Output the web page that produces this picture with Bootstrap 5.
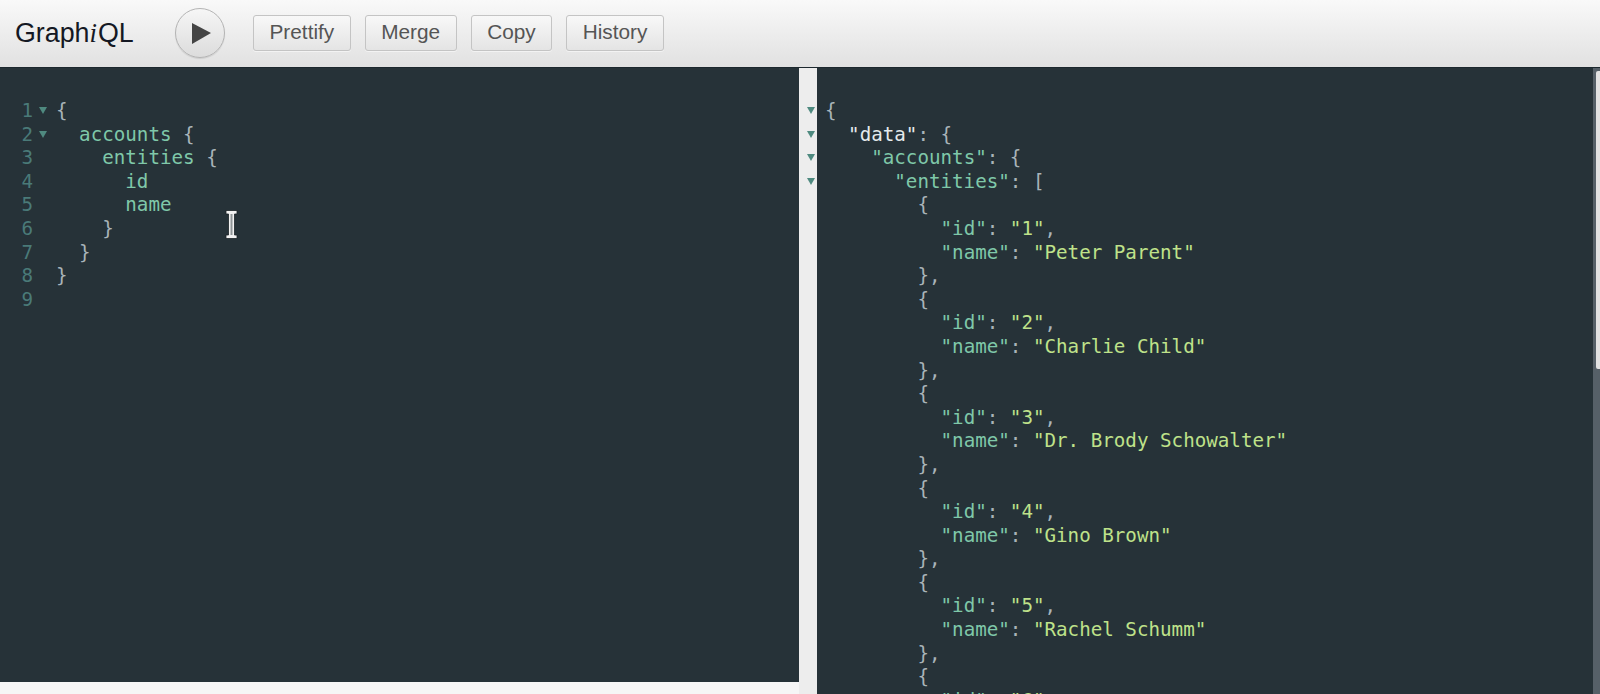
<!DOCTYPE html>
<html lang="en">
<head>
<meta charset="utf-8">
<title>GraphiQL</title>
<link href="https://cdn.jsdelivr.net/npm/bootstrap@5.3.0/dist/css/bootstrap.min.css" rel="stylesheet">
<style>
html,body{height:100%;overflow:hidden;background:#eee;}
.gq-top{height:68px;padding:8px 0 0 15px;background:linear-gradient(#f9f9f9,#e1e1e1);border-bottom:1px solid #1c282e;}
.gq-title{font-family:"Liberation Sans",sans-serif;font-size:26.8px;color:#141823;width:159.5px;line-height:50px;}
.gq-title em{font-family:"Liberation Serif",serif;padding-right:1px;}
.gq-play{width:50px;height:50px;border-radius:50%;border:1px solid #b4b4b4;padding:0;background:linear-gradient(#f6f6f6,#dcdcdc);box-shadow:0 1px 1px rgba(0,0,0,.1);margin-right:28.5px;}
.gq-tool{font-family:"Liberation Sans",sans-serif;font-size:20.8px;line-height:22px;color:#555;height:36px;padding:0 15.5px 2px;border:1px solid #c4c4c4;border-radius:3px;background:linear-gradient(#f8f8f8,#e4e4e4);margin-right:14px;margin-top:7px;box-shadow:0 1px 0 rgba(255,255,255,.5);}
.gq-main{height:626px;}
.gq-left{width:799px;height:626px;}
.gq-pane{background:#263238;font-family:"DejaVu Sans Mono",monospace;font-size:19.2px;line-height:23.6px;color:#a9b4b9;}
.gq-left .gq-pane{height:614px;padding-top:31px;}
.gq-strip{height:12px;background:#f6f6f6;}
.gq-split{width:18px;background:#ededed;padding-top:31px;}
.gq-right{padding:31px 0 0 8px;height:626px;overflow:hidden;}
.gq-row{height:23.6px;white-space:pre;}
.gq-num{width:33px;text-align:right;color:#4a7a78;}
.gq-fold{width:23px;height:23.6px;padding-left:6px;display:flex;align-items:center;}
.gq-tri{width:0;height:0;border-left:4px solid transparent;border-right:4px solid transparent;border-top:7px solid #4f8a80;display:block;}
.gq-split .gq-fold{width:18px;padding-left:8px;}
.gq-k{color:#7fc8a9;}
.gq-w{color:#e4eaec;}
.gq-s{color:#bfe28a;}
.gq-track{width:7px;background:#566068;}
.gq-thumb{width:4px;height:298px;margin:3px 0 0 3px;background:#e2e2e2;border-radius:2px 0 0 2px;display:block;}
.gq-caret{position:absolute;left:224px;top:141px;width:15px;height:31px;}
</style>
</head>
<body class="m-0">
<div class="gq-top d-flex align-items-start">
  <div class="gq-title">Graph<em>i</em>QL</div>
  <button class="gq-play d-flex align-items-center justify-content-center" type="button" aria-label="Run">
    <svg width="24" height="24" viewBox="0 0 24 24"><path d="M4 2 L23 12 L4 23 Z" fill="#444"/></svg>
  </button>
  <button class="btn gq-tool" type="button">Prettify</button>
  <button class="btn gq-tool" type="button">Merge</button>
  <button class="btn gq-tool" type="button">Copy</button>
  <button class="btn gq-tool" type="button">History</button>
</div>
<div class="gq-main d-flex position-relative">
  <div class="gq-left flex-shrink-0">
    <div class="gq-pane">
      <div class="gq-row d-flex"><span class="gq-num">1</span><span class="gq-fold"><i class="gq-tri"></i></span><span>{</span></div>
      <div class="gq-row d-flex"><span class="gq-num">2</span><span class="gq-fold"><i class="gq-tri"></i></span><span>  <span class="gq-k">accounts</span> {</span></div>
      <div class="gq-row d-flex"><span class="gq-num">3</span><span class="gq-fold"></span><span>    <span class="gq-k">entities</span> {</span></div>
      <div class="gq-row d-flex"><span class="gq-num">4</span><span class="gq-fold"></span><span>      <span class="gq-k">id</span></span></div>
      <div class="gq-row d-flex"><span class="gq-num">5</span><span class="gq-fold"></span><span>      <span class="gq-k">name</span></span></div>
      <div class="gq-row d-flex"><span class="gq-num">6</span><span class="gq-fold"></span><span>    }</span></div>
      <div class="gq-row d-flex"><span class="gq-num">7</span><span class="gq-fold"></span><span>  }</span></div>
      <div class="gq-row d-flex"><span class="gq-num">8</span><span class="gq-fold"></span><span>}</span></div>
      <div class="gq-row d-flex"><span class="gq-num">9</span></div>
    </div>
    <div class="gq-strip"></div>
  </div>
  <div class="gq-split flex-shrink-0">
    <div class="gq-fold"><i class="gq-tri"></i></div>
    <div class="gq-fold"><i class="gq-tri"></i></div>
    <div class="gq-fold"><i class="gq-tri"></i></div>
    <div class="gq-fold"><i class="gq-tri"></i></div>
  </div>
  <div class="gq-pane gq-right flex-grow-1">
<div class="gq-row">{</div>
<div class="gq-row">  <span class="gq-w">"data"</span>: {</div>
<div class="gq-row">    <span class="gq-k">"accounts"</span>: {</div>
<div class="gq-row">      <span class="gq-k">"entities"</span>: [</div>
<div class="gq-row">        {</div>
<div class="gq-row">          <span class="gq-k">"id"</span>: <span class="gq-s">"1"</span>,</div>
<div class="gq-row">          <span class="gq-k">"name"</span>: <span class="gq-s">"Peter Parent"</span></div>
<div class="gq-row">        },</div>
<div class="gq-row">        {</div>
<div class="gq-row">          <span class="gq-k">"id"</span>: <span class="gq-s">"2"</span>,</div>
<div class="gq-row">          <span class="gq-k">"name"</span>: <span class="gq-s">"Charlie Child"</span></div>
<div class="gq-row">        },</div>
<div class="gq-row">        {</div>
<div class="gq-row">          <span class="gq-k">"id"</span>: <span class="gq-s">"3"</span>,</div>
<div class="gq-row">          <span class="gq-k">"name"</span>: <span class="gq-s">"Dr. Brody Schowalter"</span></div>
<div class="gq-row">        },</div>
<div class="gq-row">        {</div>
<div class="gq-row">          <span class="gq-k">"id"</span>: <span class="gq-s">"4"</span>,</div>
<div class="gq-row">          <span class="gq-k">"name"</span>: <span class="gq-s">"Gino Brown"</span></div>
<div class="gq-row">        },</div>
<div class="gq-row">        {</div>
<div class="gq-row">          <span class="gq-k">"id"</span>: <span class="gq-s">"5"</span>,</div>
<div class="gq-row">          <span class="gq-k">"name"</span>: <span class="gq-s">"Rachel Schumm"</span></div>
<div class="gq-row">        },</div>
<div class="gq-row">        {</div>
<div class="gq-row">          <span class="gq-k">"id"</span>: <span class="gq-s">"6"</span>,</div>
  </div>
  <div class="gq-track flex-shrink-0"><span class="gq-thumb"></span></div>
  <svg class="gq-caret" viewBox="0 0 15 31" aria-hidden="true"><path d="M2 1.5 H13 V5 H10.5 V26 H13 V29.5 H2 V26 H4.5 V5 H2 Z" fill="#f2f2f2" stroke="#1a2226" stroke-width=".8"/><path d="M6.5 5 H8.5 V26 H6.5 Z" fill="#8f9597"/></svg>
</div>
</body>
</html>
